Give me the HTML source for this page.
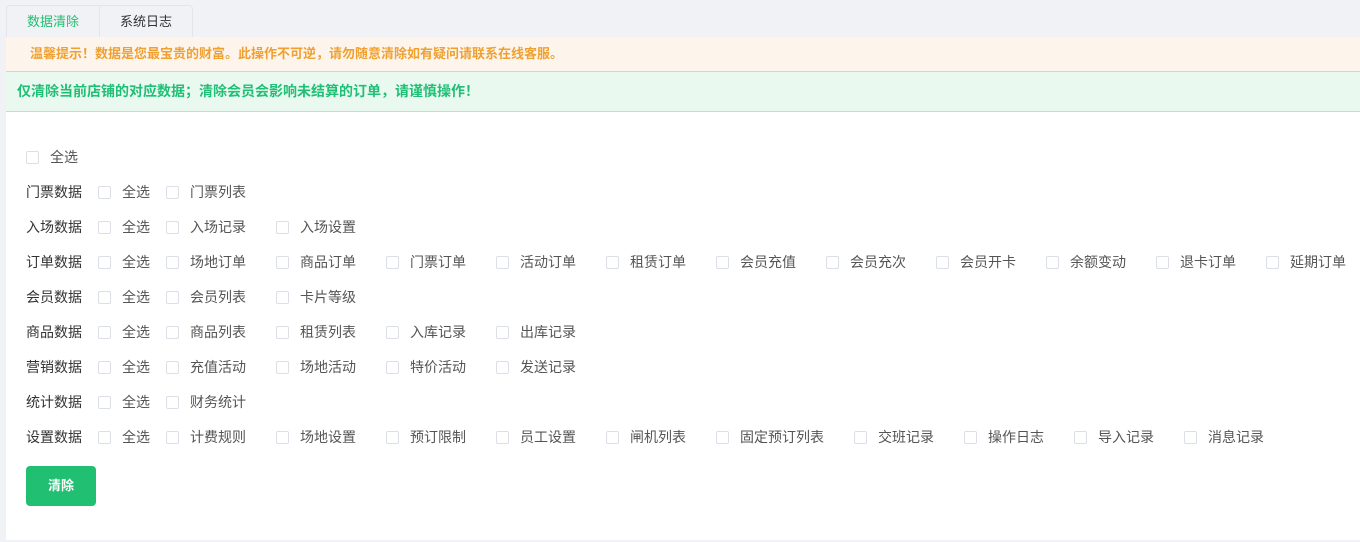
<!DOCTYPE html>
<html><head><meta charset="utf-8"><style>
*{margin:0;padding:0;box-sizing:border-box}
body{width:1360px;height:542px;background:#f0f2f5;font-family:"Liberation Sans","Noto Sans CJK SC",sans-serif;font-size:13px;color:#555;position:relative;overflow:hidden}
.tab{position:absolute;top:5px;height:33px;line-height:32px;text-align:center;background:#f0f2f5;border:1px solid #e3e5ea;border-bottom:none;font-size:13px;color:#333}
.panel{position:absolute;left:6px;top:37px;width:1354px;height:503px;background:#fff}
.warn{position:absolute;left:6px;top:37px;width:1354px;height:34px;background:#fdf5ec;color:#f0a030;line-height:34px;padding-left:24px;font-weight:bold}
.ok{position:absolute;left:6px;top:71px;width:1354px;height:41px;background:#e9f9ef;border-top:1px solid #b8e5c6;border-bottom:1px solid #b8e5c6;color:#1fbf75;line-height:39px;padding-left:11px;font-size:14px;font-weight:bold}
.r{position:absolute;height:20px;line-height:20px;color:#555;font-size:14px;margin-top:1px}
.cb{position:absolute;width:13px;height:13px;border:1px solid #dcdfe6;border-radius:2px;background:#fff;margin-top:1px}
.lbl{color:#333}
.btn{position:absolute;left:26px;top:466px;width:70px;height:40px;background:#20bf72;border-radius:4px;color:#fff;font-weight:bold;text-align:center;line-height:40px;font-size:13px}
</style></head><body>
<div class="panel"></div>
<div class="tab" style="left:6px;width:94px;color:#20bf72;border-top-left-radius:4px">数据清除</div>
<div class="tab" style="left:99px;width:94px;border-top-right-radius:4px">系统日志</div>
<div class="warn">温馨提示！数据是您最宝贵的财富。此操作不可逆，请勿随意清除如有疑问请联系在线客服。</div>
<div class="ok">仅清除当前店铺的对应数据；清除会员会影响未结算的订单，请谨慎操作！</div>

<div class="cb" style="left:26px;top:150px"></div><div class="r" style="left:50px;top:146px">全选</div>

<div class="lbl r" style="left:26px;top:181px">门票数据</div>
<div class="cb" style="left:98px;top:185px"></div><div class="r" style="left:122px;top:181px">全选</div>
<div class="cb" style="left:166px;top:185px"></div><div class="r" style="left:190px;top:181px">门票列表</div>

<div class="lbl r" style="left:26px;top:216px">入场数据</div>
<div class="cb" style="left:98px;top:220px"></div><div class="r" style="left:122px;top:216px">全选</div>
<div class="cb" style="left:166px;top:220px"></div><div class="r" style="left:190px;top:216px">入场记录</div>
<div class="cb" style="left:276px;top:220px"></div><div class="r" style="left:300px;top:216px">入场设置</div>

<div class="lbl r" style="left:26px;top:251px">订单数据</div>
<div class="cb" style="left:98px;top:255px"></div><div class="r" style="left:122px;top:251px">全选</div>
<div class="cb" style="left:166px;top:255px"></div><div class="r" style="left:190px;top:251px">场地订单</div>
<div class="cb" style="left:276px;top:255px"></div><div class="r" style="left:300px;top:251px">商品订单</div>
<div class="cb" style="left:386px;top:255px"></div><div class="r" style="left:410px;top:251px">门票订单</div>
<div class="cb" style="left:496px;top:255px"></div><div class="r" style="left:520px;top:251px">活动订单</div>
<div class="cb" style="left:606px;top:255px"></div><div class="r" style="left:630px;top:251px">租赁订单</div>
<div class="cb" style="left:716px;top:255px"></div><div class="r" style="left:740px;top:251px">会员充值</div>
<div class="cb" style="left:826px;top:255px"></div><div class="r" style="left:850px;top:251px">会员充次</div>
<div class="cb" style="left:936px;top:255px"></div><div class="r" style="left:960px;top:251px">会员开卡</div>
<div class="cb" style="left:1046px;top:255px"></div><div class="r" style="left:1070px;top:251px">余额变动</div>
<div class="cb" style="left:1156px;top:255px"></div><div class="r" style="left:1180px;top:251px">退卡订单</div>
<div class="cb" style="left:1266px;top:255px"></div><div class="r" style="left:1290px;top:251px">延期订单</div>

<div class="lbl r" style="left:26px;top:286px">会员数据</div>
<div class="cb" style="left:98px;top:290px"></div><div class="r" style="left:122px;top:286px">全选</div>
<div class="cb" style="left:166px;top:290px"></div><div class="r" style="left:190px;top:286px">会员列表</div>
<div class="cb" style="left:276px;top:290px"></div><div class="r" style="left:300px;top:286px">卡片等级</div>

<div class="lbl r" style="left:26px;top:321px">商品数据</div>
<div class="cb" style="left:98px;top:325px"></div><div class="r" style="left:122px;top:321px">全选</div>
<div class="cb" style="left:166px;top:325px"></div><div class="r" style="left:190px;top:321px">商品列表</div>
<div class="cb" style="left:276px;top:325px"></div><div class="r" style="left:300px;top:321px">租赁列表</div>
<div class="cb" style="left:386px;top:325px"></div><div class="r" style="left:410px;top:321px">入库记录</div>
<div class="cb" style="left:496px;top:325px"></div><div class="r" style="left:520px;top:321px">出库记录</div>

<div class="lbl r" style="left:26px;top:356px">营销数据</div>
<div class="cb" style="left:98px;top:360px"></div><div class="r" style="left:122px;top:356px">全选</div>
<div class="cb" style="left:166px;top:360px"></div><div class="r" style="left:190px;top:356px">充值活动</div>
<div class="cb" style="left:276px;top:360px"></div><div class="r" style="left:300px;top:356px">场地活动</div>
<div class="cb" style="left:386px;top:360px"></div><div class="r" style="left:410px;top:356px">特价活动</div>
<div class="cb" style="left:496px;top:360px"></div><div class="r" style="left:520px;top:356px">发送记录</div>

<div class="lbl r" style="left:26px;top:391px">统计数据</div>
<div class="cb" style="left:98px;top:395px"></div><div class="r" style="left:122px;top:391px">全选</div>
<div class="cb" style="left:166px;top:395px"></div><div class="r" style="left:190px;top:391px">财务统计</div>

<div class="lbl r" style="left:26px;top:426px">设置数据</div>
<div class="cb" style="left:98px;top:430px"></div><div class="r" style="left:122px;top:426px">全选</div>
<div class="cb" style="left:166px;top:430px"></div><div class="r" style="left:190px;top:426px">计费规则</div>
<div class="cb" style="left:276px;top:430px"></div><div class="r" style="left:300px;top:426px">场地设置</div>
<div class="cb" style="left:386px;top:430px"></div><div class="r" style="left:410px;top:426px">预订限制</div>
<div class="cb" style="left:496px;top:430px"></div><div class="r" style="left:520px;top:426px">员工设置</div>
<div class="cb" style="left:606px;top:430px"></div><div class="r" style="left:630px;top:426px">闸机列表</div>
<div class="cb" style="left:716px;top:430px"></div><div class="r" style="left:740px;top:426px">固定预订列表</div>
<div class="cb" style="left:854px;top:430px"></div><div class="r" style="left:878px;top:426px">交班记录</div>
<div class="cb" style="left:964px;top:430px"></div><div class="r" style="left:988px;top:426px">操作日志</div>
<div class="cb" style="left:1074px;top:430px"></div><div class="r" style="left:1098px;top:426px">导入记录</div>
<div class="cb" style="left:1184px;top:430px"></div><div class="r" style="left:1208px;top:426px">消息记录</div>

<div class="btn">清除</div>
</body></html>
